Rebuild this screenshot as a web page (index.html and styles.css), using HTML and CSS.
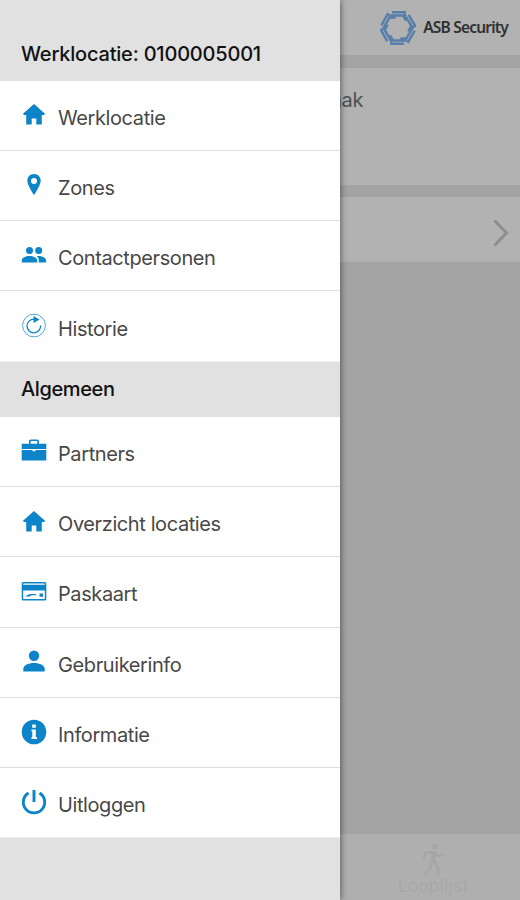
FILE: index.html
```html
<!DOCTYPE html>
<html lang="nl">
<head>
<meta charset="utf-8">
<title>ASB Security</title>
<link rel="stylesheet" href="styles.css">
</head>
<body>
<svg class="defs" aria-hidden="true">
  <symbol id="home" viewBox="0 0 26 26"><path d="M13 2 2 11.800l.8 1.200h2.400V22.500h5.500v-6h4.600v6h5.500V13h2.400l.8-1.200Z"/></symbol>
</svg>
<div class="app">
  <main class="page">
    <header class="topbar">
      <svg class="logo" viewBox="0 0 36 36" fill="none" stroke="#587fa9" stroke-width="2.500">
        <g id="arm"><path d="M12 2.200H26M8.500 5.500h14.500l3 5.200"/></g>
        <use href="#arm" transform="rotate(60 18 18)"/>
        <use href="#arm" transform="rotate(120 18 18)"/>
        <use href="#arm" transform="rotate(180 18 18)"/>
        <use href="#arm" transform="rotate(240 18 18)"/>
        <use href="#arm" transform="rotate(300 18 18)"/>
      </svg>
      <span class="brand">ASB Security</span>
    </header>
    <section class="card"><span class="card-title">Afspraak</span></section>
    <section class="link-row">
      <svg class="chevron" viewBox="0 0 16 28"><path d="m1.500 1.500 12 12.500-12 12.500" fill="none" stroke="#8e8e8e" stroke-width="3"/></svg>
    </section>
    <footer class="tabbar">
      <svg class="walker" viewBox="0 0 24 34" fill="none" stroke="#a6a6a6" stroke-width="2.600"><circle cx="14" cy="3.500" r="2.800" fill="#a6a6a6" stroke="none"/><path d="m13 18 4 6v8M11 18l-2 8-5 6M13 9l4 4 6-2M11 9l-7 1-1 6"/><path d="M10 8h5v12h-5z" fill="#a6a6a6" stroke="none"/></svg>
      <span class="tab-label">Looplijst</span>
    </footer>
  </main>
  <nav class="drawer">
    <h2 class="heading first"><span>Werklocatie: 0100005001</span></h2>
    <ul class="menu">
      <li><svg class="icon"><use href="#home"/></svg><span>Werklocatie</span></li>
      <li><svg class="icon" viewBox="0 0 26 26"><path fill-rule="evenodd" d="M13 2C9 2 6.300 4.900 6.300 8.800 6.300 13.500 13 23 13 23s6.700-9.500 6.700-14.200C19.700 4.900 17 2 13 2Zm0 4a3 3 0 1 1 0 6 3 3 0 0 1 0-6Z"/></svg><span>Zones</span></li>
      <li><svg class="icon" viewBox="0 0 26 26"><circle cx="8.500" cy="7.500" r="3.500"/><circle cx="17.700" cy="7.500" r="3.500"/><path d="M.8 19.500v-2c0-3 4-4.600 7.700-4.600s7.700 1.600 7.700 4.600v2ZM17.800 19.500v-2c0-2-.9-3.500-2.300-4.500C20 12.400 25.200 14.400 25.200 17.500v2Z"/></svg><span>Contactpersonen</span></li>
      <li><svg class="icon" viewBox="0 0 26 26"><circle cx="13" cy="12.500" r="11.400" fill="none" stroke="#3f9bd0" stroke-width=".9"/><path d="M19.600 12.500A6.800 6.800 0 1 1 13 6.200" fill="none" stroke="#0d84c8" stroke-width="1.300"/><path d="M12.500 3 18.500 6.500l-6 3.500Z"/></svg><span>Historie</span></li>
    </ul>
    <h2 class="heading"><span class="tight">Algemeen</span></h2>
    <ul class="menu">
      <li><svg class="icon" viewBox="0 0 26 26"><path fill-rule="evenodd" d="M8 5.800V3.500q0-2 2-2h6q2 0 2 2v2.300h7.300V11H.7V5.800Zm1.600 0h6.800V4q0-1-1-1h-4.800q-1 0-1 1ZM.7 12h10.800v1.200h3V12h10.800v10.500H.7Z"/></svg><span>Partners</span></li>
      <li><svg class="icon"><use href="#home"/></svg><span>Overzicht locaties</span></li>
      <li><svg class="icon" viewBox="0 0 26 26"><path fill-rule="evenodd" d="M2.200 3h21.600q1.500 0 1.500 1.500v15.500q0 1.500-1.500 1.500H2.200Q.7 21.500.7 20V4.500Q.7 3 2.200 3Zm0 1.500v1.300h21.600V4.500Zm0 7v8.500h21.600v-8.500ZM5 16.800l4-1.800h6v1.200h-5l-1 1.400H5Zm13.500-2.300H22v3.300h-3.500Z"/></svg><span>Paskaart</span></li>
      <li><svg class="icon" viewBox="0 0 26 26"><circle cx="13" cy="6.800" r="5.200"/><path d="M2.300 22.500V20c0-3.700 5-6 10.700-6s10.700 2.300 10.700 6v2.500Z"/></svg><span>Gebruikerinfo</span></li>
      <li><svg class="icon raised" viewBox="0 0 26 26"><circle cx="13" cy="13" r="12.300"/><path d="M11.200 5.500h3.600v3.200h-3.600ZM10.500 10.500h4.300v7.400H16V20h-5.500v-2.100h.8v-5.300h-.8Z" fill="#fff"/></svg><span>Informatie</span></li>
      <li><svg class="icon raised" viewBox="0 0 26 26"><path d="M7.500 4A10.700 10.700 0 1 0 18.500 4M13 1V13" fill="none" stroke="#0d84c8" stroke-width="2.900"/></svg><span>Uitloggen</span></li>
    </ul>
  </nav>
</div>
</body>
</html>
```
FILE: styles.css
```css
* { box-sizing: border-box; }
body { margin: 0; font-family: Inter, "Liberation Sans", sans-serif; }
.defs { display: none; }
.app { position: relative; width: 520px; height: 900px; overflow: hidden; }
.page { display: flex; flex-direction: column; height: 100%; background: #a3a3a3; }
.topbar { display: flex; align-items: center; justify-content: flex-end; height: 55px; padding-right: 12px; background: #b2b2b2; }
.logo { width: 36px; height: 36px; margin-right: 7px; }
.brand { margin-bottom: 2px; font: 600 15.500px "Noto Sans", sans-serif; color: #303030; letter-spacing: -.8px; white-space: nowrap; }
.card { height: 117px; margin-top: 13px; padding: 20px 157px 0 0; background: #b2b2b2; text-align: right; }
.card-title { font-size: 20px; line-height: 24px; color: #505050; letter-spacing: -.4px; }
.link-row { display: flex; align-items: center; justify-content: flex-end; height: 65px; margin-top: 12px; padding: 6px 11px 0 0; background: #b2b2b2; }
.chevron { width: 16px; height: 28px; }
.tabbar { display: flex; flex-direction: column; align-items: center; height: 66px; margin-top: auto; padding: 9px 0 0 346px; background: #afafaf; }
.walker { width: 24px; height: 34px; }
.tab-label { font-size: 17px; line-height: 18px; letter-spacing: .3px; color: #a8a8a8; }
.drawer { position: absolute; top: 0; left: 0; width: 340px; height: 900px; background: #e1e1e1; box-shadow: 0 0 7px rgba(0, 0, 0, .6); }
.heading { display: flex; align-items: center; height: 55px; margin: 0; padding-left: 21px; font-size: 20px; font-weight: 500; line-height: 24px; letter-spacing: -.2px; color: #111; background: #e1e1e1; white-space: nowrap; }
.tight { letter-spacing: -.38px; }
.first { height: 80.500px; padding-top: 27px; }
.menu { margin: 0; padding: 0; list-style: none; background: #fff; }
.menu li { display: flex; align-items: center; height: 70.300px; border-bottom: 1px solid #dedede; font-size: 20px; line-height: 24px; letter-spacing: -.4px; color: #484848; }
.menu li:last-child { border-bottom-color: #eee; }
.menu span { margin-top: 5px; white-space: nowrap; }
.icon { width: 26px; height: 26px; margin: 0 11px 0 21px; fill: #0d84c8; }
.raised { margin-bottom: 2px; }
```
